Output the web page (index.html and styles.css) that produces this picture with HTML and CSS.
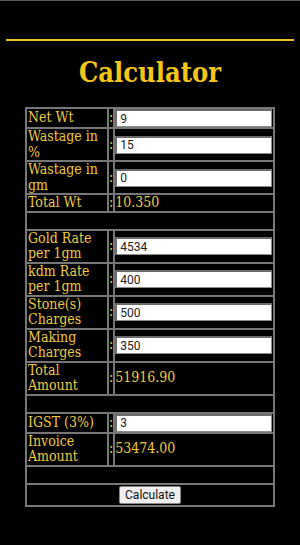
FILE: index.html
```html
<!DOCTYPE html>
<html>
<head>
<meta charset="utf-8">
<link rel="stylesheet" href="styles.css">
</head>
<body>
<div class="page">
  <div class="rule"></div>
  <h1 class="title">Calculator</h1>
  <table class="calc">
    <tr><td class="l">Net Wt</td><td class="c">:</td><td class="v"><input class="in" type="text" value="9"></td></tr>
    <tr><td class="l">Wastage in %</td><td class="c">:</td><td class="v"><input class="in" type="text" value="15"></td></tr>
    <tr><td class="l">Wastage in gm</td><td class="c">:</td><td class="v"><input class="in" type="text" value="0"></td></tr>
    <tr><td class="l">Total Wt</td><td class="c">:</td><td class="v">10.350</td></tr>
    <tr><td class="e" colspan="3">&nbsp;</td></tr>
    <tr><td class="l">Gold Rate per 1gm</td><td class="c">:</td><td class="v"><input class="in" type="text" value="4534"></td></tr>
    <tr><td class="l">kdm Rate per 1gm</td><td class="c">:</td><td class="v"><input class="in" type="text" value="400"></td></tr>
    <tr><td class="l">Stone(s) Charges</td><td class="c">:</td><td class="v"><input class="in" type="text" value="500"></td></tr>
    <tr><td class="l">Making Charges</td><td class="c">:</td><td class="v"><input class="in" type="text" value="350"></td></tr>
    <tr><td class="l">Total Amount</td><td class="c">:</td><td class="v">51916.90</td></tr>
    <tr><td class="e" colspan="3">&nbsp;</td></tr>
    <tr><td class="l">IGST (3%)</td><td class="c">:</td><td class="v"><input class="in" type="text" value="3"></td></tr>
    <tr><td class="l">Invoice Amount</td><td class="c">:</td><td class="v">53474.00</td></tr>
    <tr><td class="e" colspan="3">&nbsp;</td></tr>
    <tr><td class="b" colspan="3"><button class="btn" type="button">Calculate</button></td></tr>
  </table>
</div>
</body>
</html>
```
FILE: styles.css
```css
html, body {
  margin: 0;
  padding: 0;
  background: #000;
}
.page {
  border-top: 1px solid #5a5a5a;
  min-height: 544px;
}
.rule {
  height: 2px;
  background: #e9c32e;
  margin: 38px 6px 0;
}
.title {
  margin: 17px 0 19px;
  text-align: center;
  font-family: "DejaVu Serif", serif;
  font-weight: bold;
  font-stretch: condensed;
  font-size: 27px;
  line-height: 30px;
  color: #f5c518;
}
.calc {
  margin: 0 auto;
  width: 250px;
  border: 1px solid #777;
  border-spacing: 0;
}
.calc td {
  border: 1px solid #777;
  padding: 0 1px;
  font-family: "DejaVu Serif", serif;
  font-stretch: condensed;
  font-size: 14px;
  line-height: 15.5px;
  color: #eec93e;
  vertical-align: middle;
}
.calc td.l {
  width: 78px;
}
.calc td.c {
  padding: 0;
}
.calc td.v {
  padding-left: 0;
}
.calc td.e {
  height: 16px;
}
.calc td.b {
  text-align: center;
  padding: 1px 0;
}
.in {
  display: block;
  box-sizing: border-box;
  width: 100%;
  height: 18px;
  margin: 0;
  padding: 0 3px;
  border: 1px solid #8a8a8a;
  border-top-width: 2px;
  border-left-width: 2px;
  border-top-color: #6a6a6a;
  border-left-color: #6a6a6a;
  background: #fff;
  font-family: "Roboto", "Liberation Sans", sans-serif;
  font-size: 12px;
  color: #222;
}
.btn {
  box-sizing: border-box;
  height: 18px;
  padding: 0 5px;
  border: 1px solid #888;
  border-radius: 2px;
  background: #efefef;
  font-family: "Roboto", "Liberation Sans", sans-serif;
  font-size: 12px;
  color: #111;
}
```
